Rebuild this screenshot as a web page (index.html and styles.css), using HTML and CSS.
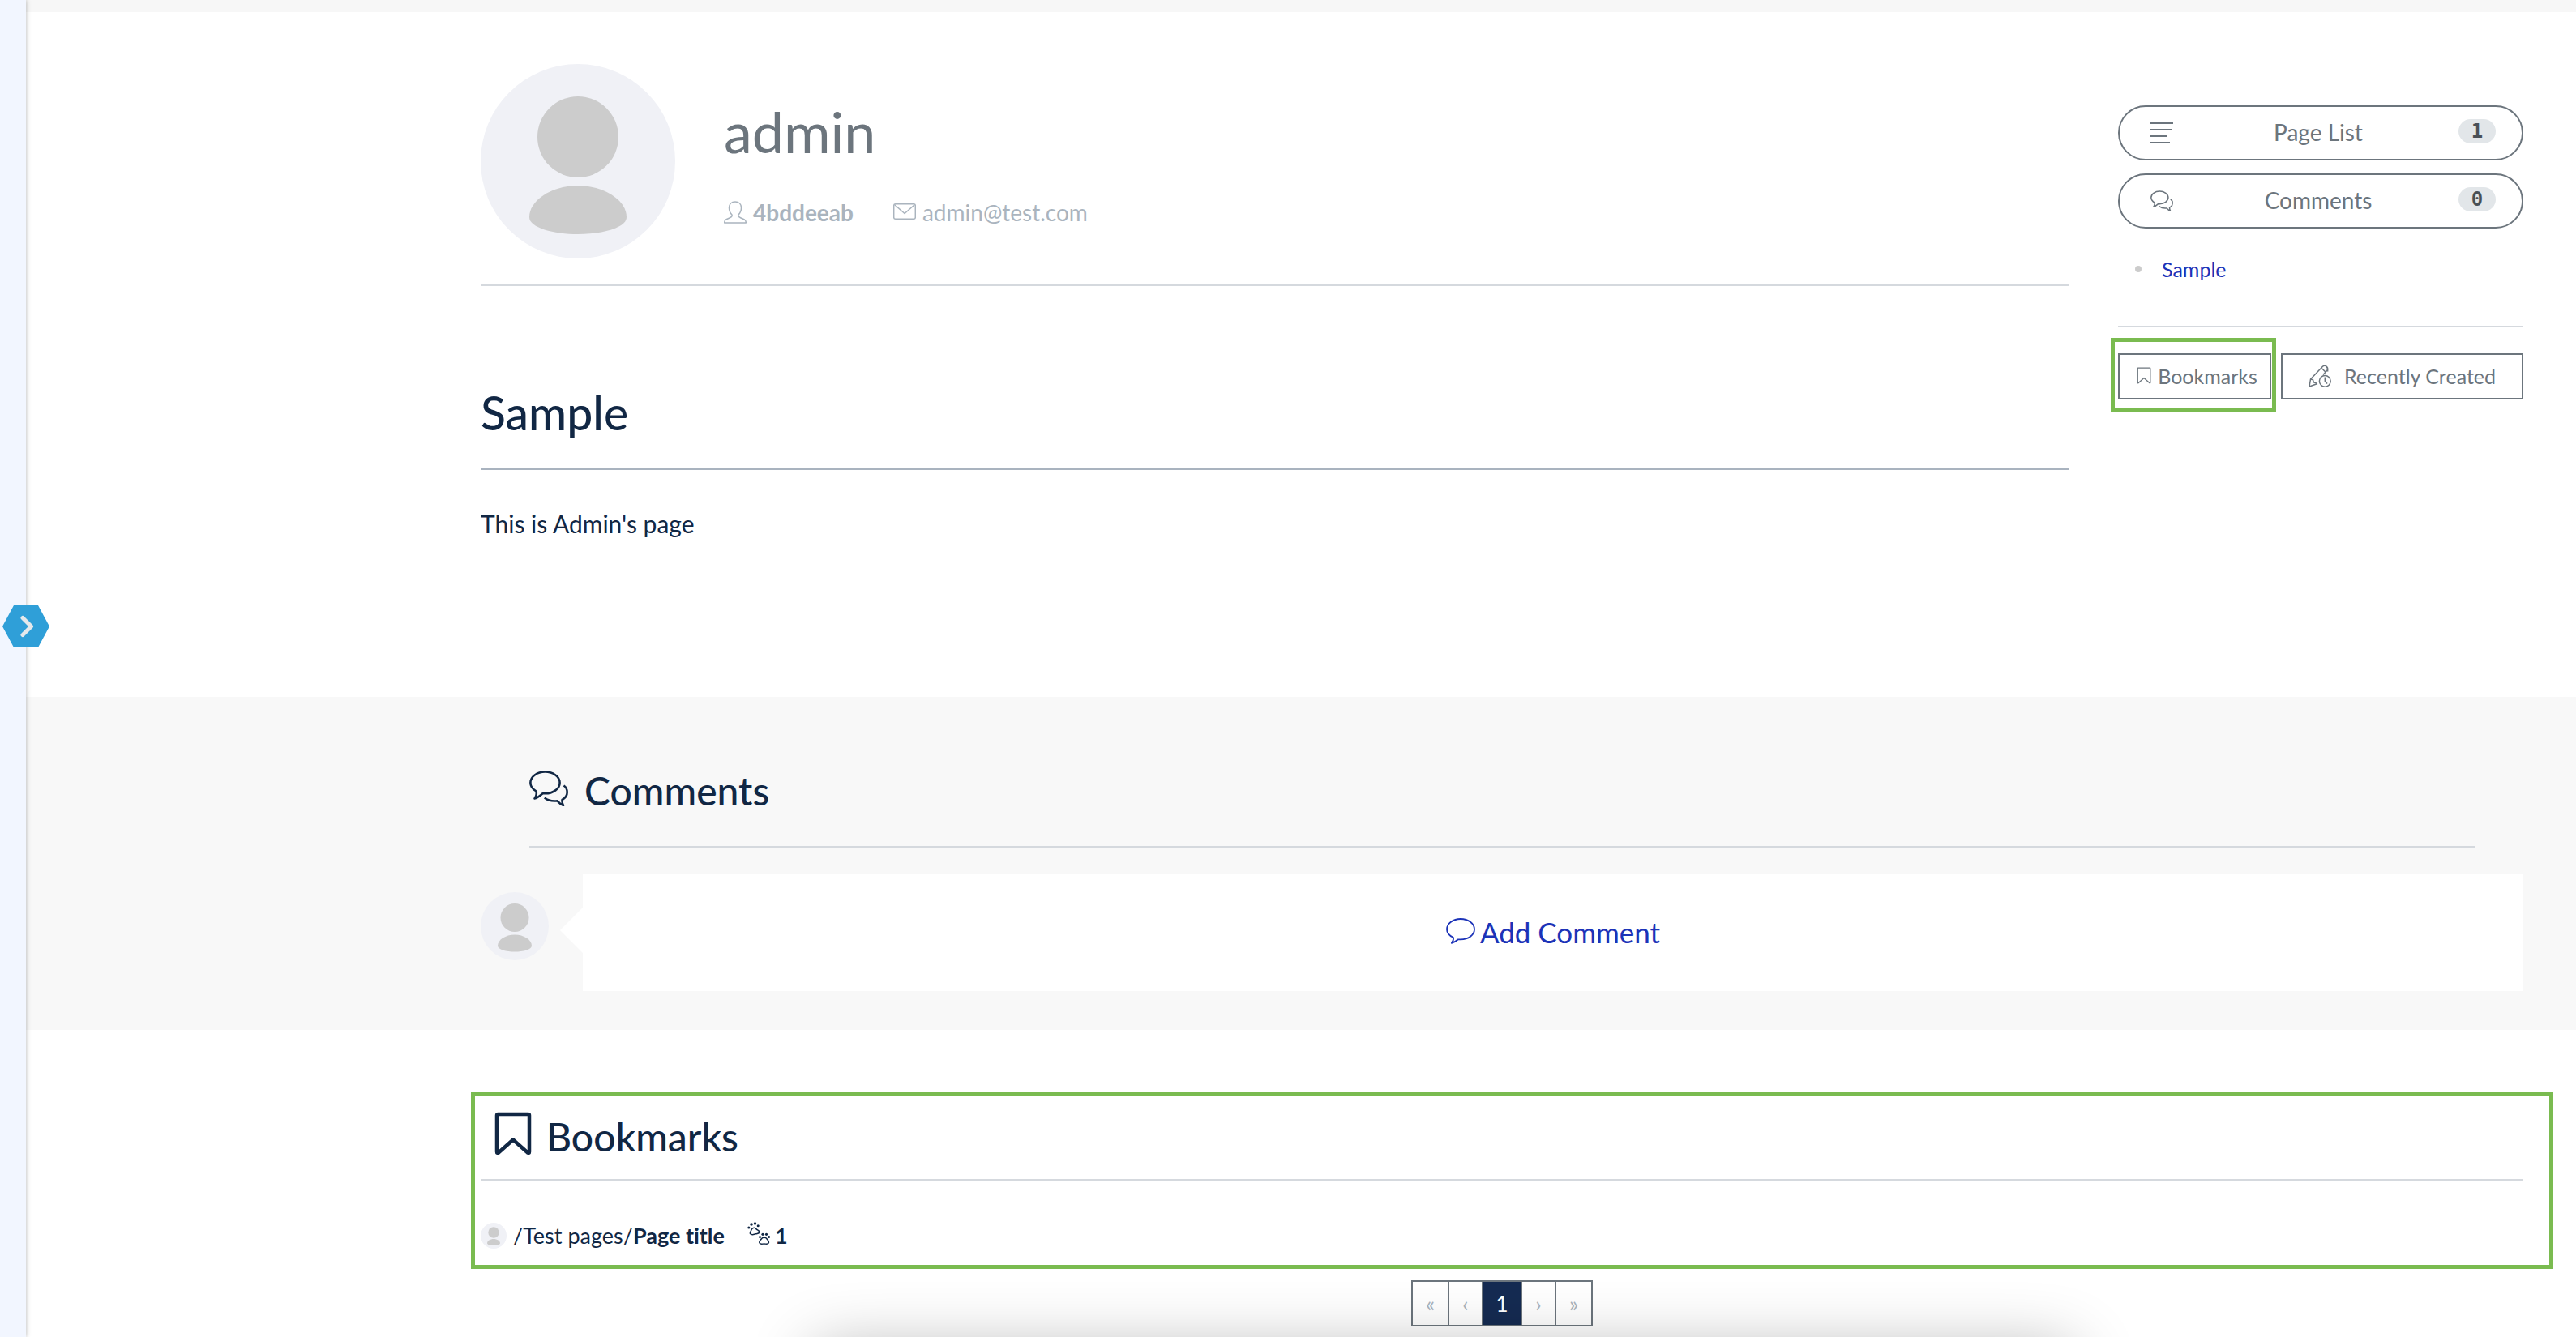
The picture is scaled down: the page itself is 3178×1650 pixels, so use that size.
FILE: index.html
```html
<!DOCTYPE html>
<html lang="en">
<head>
<meta charset="utf-8">
<title>admin</title>
<link rel="stylesheet" href="styles.css">
</head>
<body>
<svg class="sprite" aria-hidden="true">
  <symbol id="avatar" viewBox="0 0 240 240">
    <circle cx="120" cy="120" r="120" fill="#f0f1f6"/>
    <circle cx="120" cy="90" r="50" fill="#ccc"/>
    <path d="M60 189C60 168 88 150 120 150s60 18 60 39c0 13-30 21-60 21s-60-8-60-21z" fill="#ccc"/>
  </symbol>
  <symbol id="bubbles" viewBox="0 0 48 44">
    <path d="M8.500 25.500C4 22.800 1.400 19 1.400 14.900 1.400 7.500 9.500 1.500 19.500 1.500S37.600 7.500 37.600 14.900 29.500 28.300 19.500 28.300H16.500C13.500 31 10.500 33.500 6.500 34.500 8.800 31.500 9.300 29 8.500 25.500z"/>
    <path d="M42.500 18.500C45.500 20.500 46.700 23.500 46.700 26.800 46.700 30.500 44.500 33.800 40.500 36 40.300 38.500 40.800 41 42 43 38.500 41.500 36.500 39.500 34.500 37.300 28.500 38 22.500 36.500 18.800 33.500"/>
  </symbol>
  <symbol id="bookmark" viewBox="0 0 46 54">
    <path d="M3 4.500Q3 3 4.500 3H41.500Q43 3 43 4.500V49.500Q43 51.500 41 50.500L23 34.500 5 50.500Q3 51.500 3 49.500z"/>
  </symbol>
</svg>

<nav class="rail" aria-label="Sidebar">
  <button class="rail-toggle" aria-label="Open sidebar">
    <svg viewBox="0 0 58 52"><path d="M14 0H44L58 26 44 52H14L0 26z" fill="#2f9fd8"/><path d="M25 15.500 35.500 26 25 36.500" fill="none" stroke="#e4e8eb" stroke-width="5" stroke-linecap="round" stroke-linejoin="round"/></svg>
  </button>
</nav>

<div class="page">
  <div class="topbar"></div>
  <div class="content columns">
    <main class="main">
      <header class="profile">
        <svg class="avatar-lg"><use href="#avatar"/></svg>
        <div class="profile-text">
          <h1>admin</h1>
          <ul class="meta">
            <li><svg class="icon" viewBox="0 0 28 28"><path d="M14 1C9.500 1 6.500 4 6.500 8.500c0 3.500 1.500 6.500 3.500 8.500.5 2-.5 3-2.500 3.800L2.500 23C1 24 .7 25 .7 27H27.300c0-2-.3-3-1.800-4l-5-2.200C18.500 20 17.500 19 18 17c2-2 3.500-5 3.500-8.500C21.500 4 18.500 1 14 1z"/></svg><strong>4bddeeab</strong></li>
            <li><svg class="icon mail" viewBox="0 0 28 28"><rect x="0.700" y="5.700" width="26.600" height="18.600" rx="2"/><path d="M1.500 6.500 14 17.500 26.500 6.500"/></svg><span>admin@test.com</span></li>
          </ul>
        </div>
      </header>
      <article class="wiki">
        <h2>Sample</h2>
        <p>This is Admin's page</p>
      </article>
    </main>

    <aside class="side">
      <button class="pill"><svg class="icon" viewBox="0 0 28 28"><path stroke-width="2.200" d="M0 2H28M0 10H26M0 18H21M0 26H24"/></svg><span class="pill-label">Page List</span><span class="badge">1</span></button>
      <button class="pill"><svg class="icon bubbles-sm"><use href="#bubbles"/></svg><span class="pill-label">Comments</span><span class="badge">0</span></button>
      <ul class="toc"><li><a href="#sample">Sample</a></li></ul>
      <div class="shortcuts">
        <button class="box bm"><svg class="icon bookmark-sm"><use href="#bookmark"/></svg>Bookmarks</button>
        <button class="box recent"><svg class="icon" viewBox="0 0 28 28"><path d="M11 23.500 1 27 2.500 18 17.500 2.200C19 .8 21 .8 22.500 2.500S24 6 22.500 7.500L18 12.500M15.800 4l5 5M2.500 18l3 .8.800 3 3.500 1.200M22 2.200c1.500 1.500 2 4 1.500 6.300"/><circle cx="20.300" cy="20.300" r="6.900"/><path d="M20.300 15.500v5l2.800 3"/></svg>Recently Created</button>
      </div>
    </aside>
  </div>

  <section class="comments">
    <div class="content">
      <h2 class="comments-title"><svg class="bubbles-lg"><use href="#bubbles"/></svg>Comments</h2>
      <div class="comment-form">
        <svg class="avatar-md"><use href="#avatar"/></svg>
        <button class="add-comment"><svg viewBox="0 0 36 32"><path d="M9 24C4 21.800 1 18 1 13.800 1 6.700 8.500 1 18 1S35 6.700 35 13.800 27.500 26.300 18 26.300H15C12.500 28.500 9.800 30 6.800 30.800 8.800 28.500 9.300 26.500 9 24z"/></svg>Add Comment</button>
      </div>
    </div>
  </section>

  <section class="content bookmarks">
    <h2 class="bookmarks-title"><svg class="bookmark-lg"><use href="#bookmark"/></svg>Bookmarks</h2>
    <div class="page-item">
      <svg class="avatar-sm"><use href="#avatar"/></svg>
      <a href="#page">/Test pages/<strong>Page title</strong></a>
      <span class="seen"><svg class="icon" viewBox="0 0 28 28"><g class="dots"><circle cx="1.800" cy="7" r="1.500"/><circle cx="5" cy="3" r="1.800"/><circle cx="9.500" cy="2" r="1.700"/><circle cx="13.200" cy="4.800" r="1.500"/><circle cx="15.500" cy="18.500" r="1.500"/><circle cx="19" cy="15.300" r="1.600"/><circle cx="23.500" cy="15.300" r="1.600"/><circle cx="26.600" cy="18.500" r="1.500"/></g><path d="M3.500 14.500C2.800 12.500 4.500 11.300 5.300 9.300 6.500 6.800 9.500 6.700 11 8.700c1 1.300 3.500 1.300 3.800 3.500.2 2.200-2 2.200-4.500 2.600-2.300.4-4.300 2.200-6.800-.3zM15 26c-1-2.300 1-3.200 2.200-5 1.500-2.400 5.500-2.400 7 0 1.200 1.800 3 2.700 2 5-1 2-3.500 1-5.600 1s-4.600 1-5.600-1z"/></svg>1</span>
    </div>
  </section>
  <nav class="content pager" aria-label="Pagination">
    <ul>
      <li><button class="edge" disabled>«</button></li>
      <li><button disabled>‹</button></li>
      <li><button class="current">1</button></li>
      <li><button disabled>›</button></li>
      <li><button class="edge" disabled>»</button></li>
    </ul>
  </nav>
  <div class="glow"></div>
</div>
</body>
</html>
```
FILE: styles.css
```css
* { box-sizing: border-box; }
:root {
  --navy: #112744;
  --gray: #6c757d;
  --mute: #aab4be;
  --line: #d5d9de;
  --green: #7abb50;
}
body {
  margin: 0;
  display: flex;
  min-height: 100vh;
  background: #fff;
  color: var(--navy);
  font-family: Lato, "Liberation Sans", sans-serif;
  font-size: 28px;
  line-height: 42px;
  font-variant-ligatures: none;
}
h1, h2, p, ul { margin: 0; padding: 0; }
h1 { font-weight: 400; }
h2 { font-weight: 500; }
ul { list-style: none; }
button { font: inherit; color: inherit; background: none; border: 0; padding: 0; margin: 0; }
a { color: inherit; text-decoration: none; }
svg { display: block; flex: none; fill: none; stroke: currentColor; stroke-width: 1.5; stroke-linejoin: round; }
.sprite { position: absolute; width: 0; height: 0; }
.sprite #avatar { stroke: none; }
.icon { width: 28px; height: 28px; }

.rail {
  position: relative;
  flex: none;
  width: 32px;
  background: #f2f6ff;
  box-shadow: 0 0 6px rgba(0, 0, 0, .3);
  z-index: 1;
}
.rail-toggle { position: absolute; left: 3px; top: 747px; width: 58px; height: 52px; }
.rail-toggle svg { width: 58px; height: 52px; stroke: none; }

.page { position: relative; flex: 1; min-width: 0; overflow: hidden; }
.topbar { height: 15px; background: #f7f7f7; }
.content { padding: 0 65px 0 561px; }

.columns { display: flex; gap: 60px; min-height: 845px; }
.main { flex: 1; padding-top: 64px; }
.profile {
  display: flex;
  gap: 60px;
  padding-bottom: 32px;
  border-bottom: 2px solid var(--line);
}
.avatar-lg { width: 240px; height: 240px; }
.profile-text { padding-top: 40px; }
h1 { font-size: 70px; line-height: 86px; color: var(--gray); }
.meta { display: flex; gap: 49px; padding-top: 36px; color: var(--mute); }
.meta li { display: flex; align-items: center; gap: 8px; }
.mail { margin-bottom: 4px; }
.wiki { padding-top: 118px; }
.wiki h2 {
  font-size: 57px;
  line-height: 76px;
  padding-bottom: 31px;
  border-bottom: 2px solid #a9b3bf;
}
.wiki p { font-size: 30px; line-height: 46px; padding-top: 43px; }

.side { width: 500px; padding-top: 115px; color: var(--gray); }
.pill {
  display: flex;
  align-items: center;
  width: 100%;
  height: 68px;
  margin-bottom: 16px;
  padding: 0 32px 0 38px;
  border: 2px solid var(--gray);
  border-radius: 34px;
}
.pill-label { flex: 1; padding: 0 0 2px 6px; text-align: center; }
.bubbles-sm { stroke-width: 2.6; }
.badge {
  width: 46px;
  height: 30px;
  margin-bottom: 4px;
  border-radius: 15px;
  background: #e2e6e9;
  color: #495057;
  font: bold 24px/30px "DejaVu Sans Mono", monospace;
}
.toc { padding: 11px 0 47px 21px; font-size: 25px; }
.toc li { display: flex; align-items: center; gap: 25px; height: 46px; }
.toc li::before { content: ""; width: 8px; height: 8px; border-radius: 50%; background: #ccc; }
.toc a { color: #1c33b8; }
.shortcuts { display: flex; gap: 12px; padding-top: 32px; border-top: 2px solid var(--line); }
.box {
  display: flex;
  align-items: center;
  justify-content: center;
  gap: 8px;
  height: 57px;
  padding-bottom: 2px;
  border: 2px solid var(--gray);
  font-size: 25px;
}
.bm { position: relative; width: 189px; padding-left: 6px; }
.bm::after {
  content: "";
  position: absolute;
  inset: -21px -8px -18px -11px;
  border: 5px solid var(--green);
}
.bookmark-sm { width: 18px; height: 21px; stroke-width: 3.5; }
.recent { flex: 1; gap: 16px; }

.comments { padding: 78px 0 48px; background: #f8f8f8; }
.comments-title {
  display: flex;
  align-items: center;
  gap: 20px;
  margin: 0 60px 32px;
  padding-bottom: 30px;
  border-bottom: 2px solid var(--line);
  font-size: 48px;
  line-height: 76px;
}
.bubbles-lg { width: 48px; height: 44px; stroke-width: 2.6; margin-bottom: 6px; }
.comment-form { display: flex; gap: 42px; }
.avatar-md { width: 84px; height: 84px; margin-top: 23px; }
.add-comment {
  position: relative;
  flex: 1;
  display: flex;
  align-items: center;
  justify-content: center;
  gap: 6px;
  height: 145px;
  padding-bottom: 2px;
  background: #fff;
  color: #1c33b8;
  font-size: 35px;
}
.add-comment::before {
  content: "";
  position: absolute;
  left: -28px;
  top: 42px;
  border: 28px solid transparent;
  border-left: 0;
  border-right-color: #fff;
}
.add-comment svg { width: 36px; height: 32px; stroke-width: 1.8; margin-bottom: 2px; }

.bookmarks { position: relative; padding-top: 94px; }
.bookmarks::after {
  content: "";
  position: absolute;
  left: 549px;
  right: 28px;
  top: 77px;
  bottom: 0;
  border: 5px solid var(--green);
  pointer-events: none;
}
.bookmarks-title {
  display: flex;
  align-items: center;
  gap: 18px;
  padding: 0 0 14px 17px;
  border-bottom: 2px solid var(--line);
  font-size: 48px;
  line-height: 76px;
}
.bookmark-lg { width: 46px; height: 54px; stroke-width: 4.5; margin-bottom: 8px; }
.page-item { display: flex; align-items: center; gap: 8px; padding: 47px 0 20px; font-size: 27px; }
.avatar-sm { width: 32px; height: 32px; }
.seen { display: flex; align-items: center; gap: 6px; padding-left: 20px; font-weight: 700; }
.seen .icon { margin-bottom: 6px; }
.seen .dots { fill: currentColor; stroke: none; }

.pager { padding-top: 14px; }
.pager ul { display: flex; justify-content: center; }
.pager li + li { margin-left: -2px; }
.pager button {
  width: 44px;
  height: 57px;
  border: 2px solid var(--gray);
  color: var(--mute);
  font-size: 26px;
}
.pager .edge { width: 47px; }
.pager .current { width: 50px; background: #152b52; color: #fff; }

/* Soft shadow cast upwards by the bar docked under the window */
.glow {
  position: absolute;
  left: 973px;
  right: 622px;
  bottom: -115px;
  height: 100px;
  box-shadow: 0 0 80px rgba(0, 0, 0, .3);
  pointer-events: none;
}
```
